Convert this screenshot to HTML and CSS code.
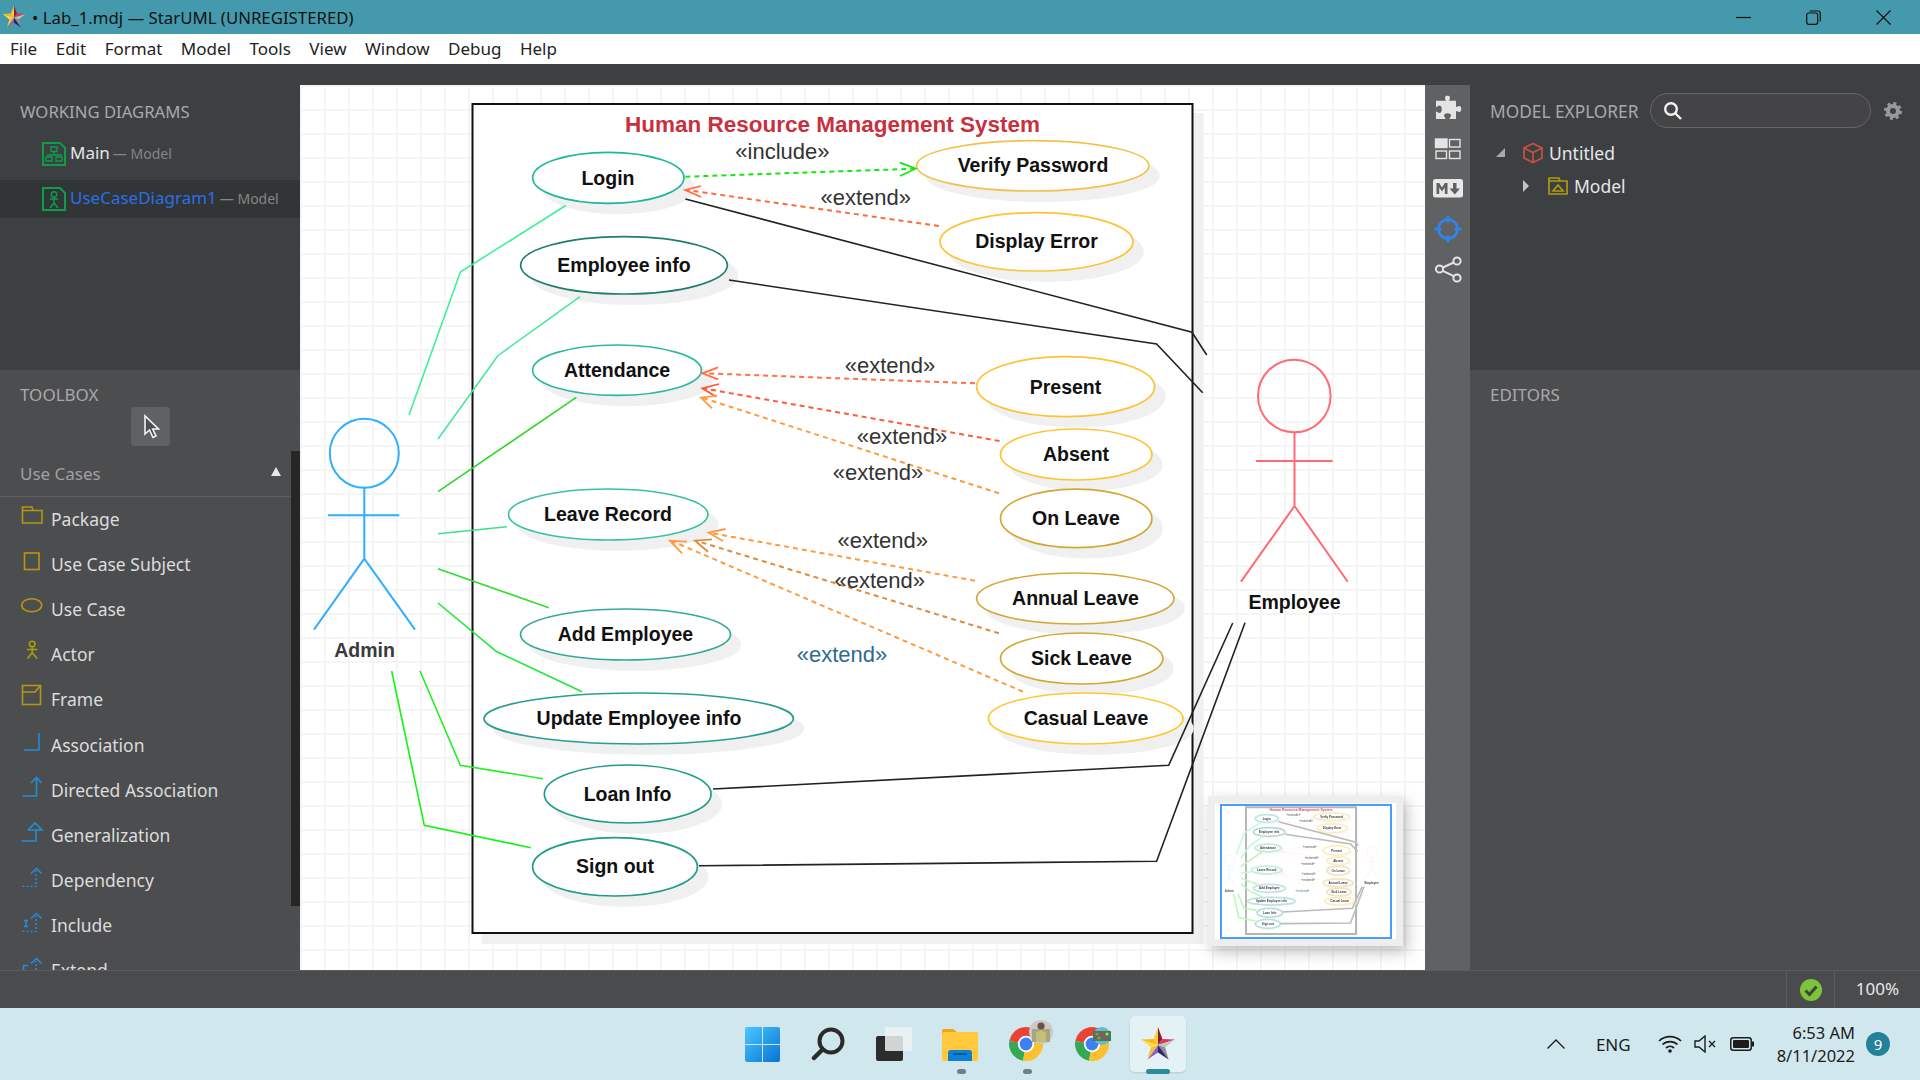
FILE: index.html
```html
<!DOCTYPE html>
<html lang="en">
<head>
    <meta charset="UTF-8">
    <meta name="viewport" content="width=device-width, initial-scale=1.0">
    <title>Lab_1.mdj — StarUML (UNREGISTERED)</title>
    <link rel="stylesheet" href="styles.css">
</head>
<body>
    <!-- shared star logo, used in the title bar and the taskbar -->
    <svg class="defs" width="0" height="0">
        <symbol id="star" viewBox="0 0 36 36">
            <polygon points="18,19 18,1 22.4,12.9" fill="#8c1a3c"/>
            <polygon points="18,19 22.4,12.9 35.1,13.4" fill="#d93a56"/>
            <polygon points="18,19 35.1,13.4 25.1,21.3" fill="#c4c4c4"/>
            <polygon points="18,19 25.1,21.3 28.6,33.6" fill="#8f8f8f"/>
            <polygon points="18,19 28.6,33.6 18,26.5" fill="#2d2366"/>
            <polygon points="18,19 18,26.5 7.4,33.6" fill="#8e5bd0"/>
            <polygon points="18,19 7.4,33.6 10.9,21.3" fill="#f2c230"/>
            <polygon points="18,19 10.9,21.3 0.9,13.4" fill="#ffdb4d"/>
            <polygon points="18,19 0.9,13.4 13.6,12.9" fill="#f7b918"/>
            <polygon points="18,19 13.6,12.9 18,1" fill="#fbcf2f"/>
        </symbol>
        <symbol id="chrome" viewBox="0 0 34 34">
            <path d="M17 17L31.7 8.5A17 17 0 0 0 .3 14Z" fill="#ea4335"/>
            <path d="M17 17L.3 14A17 17 0 0 0 14 33.7Z" fill="#34a853"/>
            <path d="M17 17L14 33.7A17 17 0 0 0 31.7 8.5Z" fill="#fbc02d"/>
            <circle cx="17" cy="17" r="8.2" fill="#fff"/>
            <circle cx="17" cy="17" r="6.4" fill="#3b82f0"/>
        </symbol>
        <linearGradient id="winblue" x1="0" y1="0" x2="1" y2="1">
            <stop offset="0" stop-color="#4cc6ff"/>
            <stop offset="1" stop-color="#0674d6"/>
        </linearGradient>
    </svg>

    <div class="titlebar">
        <div class="title-left">
            <svg class="logo" width="24" height="24"><use href="#star"/></svg>
            <span>• Lab_1.mdj — StarUML (UNREGISTERED)</span>
        </div>
        <div class="win-controls">
            <svg width="15" height="15" viewBox="0 0 15 15"><path d="M0 7.5H15"/></svg>
            <svg width="15" height="15" viewBox="0 0 15 15"><rect x="0.7" y="3" width="11" height="11.3" rx="2"/><path d="M3.5 1H12A2.5 2.5 0 0 1 14.3 3.5V11.5"/></svg>
            <svg width="15" height="15" viewBox="0 0 15 15"><path d="M0.5 0.5L14.5 14.5M14.5 0.5L0.5 14.5"/></svg>
        </div>
    </div>

    <div class="menubar">
        <span>File</span><span>Edit</span><span>Format</span><span>Model</span><span>Tools</span><span>View</span><span>Window</span><span>Debug</span><span>Help</span>
    </div>

    <div class="workspace">
        <div class="sidebar">
            <div class="working">
                <div class="panel-title">WORKING DIAGRAMS</div>
                <div class="diagram-row">
                    <svg class="doc-icon" viewBox="0 0 24 24" width="24" height="24">
                        <path d="M1 1H18L23 6V23H1Z"/>
                        <path class="thin" d="M9 5H15V9.5H9ZM12 9.5V13M5 13H19V14M4 15H10V19H4ZM14 15H20V19H14Z"/>
                    </svg>
                    <span class="row-name">Main</span><span class="row-sub">— Model</span>
                </div>
                <div class="diagram-row selected">
                    <svg class="doc-icon" viewBox="0 0 24 24" width="24" height="24">
                        <path d="M1 1H18L23 6V23H1Z"/>
                        <path class="thin" d="M12 10V16M8 12H16M12 16L8 21M12 16L16 21"/>
                        <circle class="thin" cx="12" cy="7.5" r="2.7"/>
                    </svg>
                    <span class="row-name">UseCaseDiagram1</span><span class="row-sub">— Model</span>
                </div>
            </div>

            <div class="toolbox">
                <div class="panel-title">TOOLBOX</div>
                <div class="tool-row">
                    <div class="pointer-btn">
                        <svg width="22" height="26" viewBox="0 0 22 26"><path d="M4 2V20L8.5 16L12 23.5L15 22L11.7 15H17.5Z"/></svg>
                    </div>
                </div>
                <div class="toolbox-body">
                    <div class="toolbox-main">
                        <div class="group-head"><span>Use Cases</span><i class="tri-up"></i></div>
                        <ul class="tool-list">
                            <li><svg class="gold" viewBox="0 0 24 24"><path d="M2.5 8.5H22V21H2.5ZM2.5 8.5V5H12L13 8.5"/></svg>Package</li>
                            <li><svg class="gold" viewBox="0 0 24 24"><rect x="4.5" y="6" width="14.5" height="16.5"/></svg>Use Case Subject</li>
                            <li><svg class="gold" viewBox="0 0 24 24"><ellipse cx="11.7" cy="13.3" rx="10" ry="6.5"/></svg>Use Case</li>
                            <li><svg class="gold" viewBox="0 0 24 24"><circle cx="12.2" cy="7" r="2.8"/><path d="M12.2 10V15.5M7 12.5H17.5M12.2 15.5L7.5 21.5M12.2 15.5L17 21.5"/></svg>Actor</li>
                            <li><svg class="gold" viewBox="0 0 24 24"><rect x="2.5" y="3.5" width="18" height="19"/><path d="M2.5 10H15L20 4"/></svg>Frame</li>
                            <li><svg class="blue" viewBox="0 0 24 24"><path d="M4 22H19V5"/></svg>Association</li>
                            <li><svg class="blue" viewBox="0 0 24 24"><path d="M2.5 23H16.5V5M11 10L16.5 4.5L21.5 10"/></svg>Directed Association</li>
                            <li><svg class="blue" viewBox="0 0 24 24"><path d="M1.5 23H16V12M8 12L15 5L22 12H8"/></svg>Generalization</li>
                            <li><svg class="blue" viewBox="0 0 24 24"><path class="dots" d="M2.5 23.5H16V8"/><path d="M11 10.5L16.5 5.5L21.5 10.5"/></svg>Dependency</li>
                            <li><svg class="blue" viewBox="0 0 24 24"><path class="dots" d="M2.5 23.5H16V8"/><path d="M11 10.5L16.5 5.5L21.5 10.5M4 12.5H8M6 12.5V18.5M4 18.5H8"/></svg>Include</li>
                            <li><svg class="blue" viewBox="0 0 24 24"><path class="dots" d="M2.5 23.5H16V8"/><path d="M11 10.5L16.5 5.5L21.5 10.5M8 12.5H3.5V18.5H8"/></svg>Extend</li>
                        </ul>
                    </div>
                    <div class="scroll-thumb"></div>
                </div>
            </div>
        </div>

        <div class="center">
            <div class="canvas">
                <svg class="diagram" viewBox="300 85 1125 885" width="1125" height="885">
                    <g id="umlShapes">
                        <rect class="frame" x="472.5" y="104" width="720" height="829"/>

                        <!-- use cases -->
                        <ellipse class="uc" stroke="#1fb5a0" cx="608.3" cy="177.8" rx="75.7" ry="25.5"/>
                        <ellipse class="uc" stroke="#f4c04a" cx="1032.8" cy="165.8" rx="116.2" ry="25.2"/>
                        <ellipse class="uc" stroke="#ffc233" cx="1036.5" cy="241.8" rx="96.5" ry="29.2"/>
                        <ellipse class="uc" stroke="#1f7f6e" cx="624" cy="265.3" rx="103.4" ry="28.7"/>
                        <ellipse class="uc" stroke="#2fb8a0" cx="617" cy="370.2" rx="84.4" ry="25.2"/>
                        <ellipse class="uc" stroke="#ffc233" cx="1065.6" cy="386.7" rx="89" ry="30"/>
                        <ellipse class="uc" stroke="#ffc233" cx="1076.2" cy="454.5" rx="75.7" ry="25.5"/>
                        <ellipse class="uc" stroke="#d4a733" cx="1076.2" cy="518.4" rx="75.7" ry="29.3"/>
                        <ellipse class="uc" stroke="#3cc0a5" cx="608.2" cy="514.5" rx="99.7" ry="25.5"/>
                        <ellipse class="uc" stroke="#d4a93a" cx="1075.3" cy="598.5" rx="98.7" ry="25.5"/>
                        <ellipse class="uc" stroke="#d4a733" cx="1081.7" cy="658.5" rx="81.2" ry="25.5"/>
                        <ellipse class="uc" stroke="#ffc72e" cx="1085.7" cy="718.5" rx="97.3" ry="25.5"/>
                        <ellipse class="uc" stroke="#35a898" cx="625.5" cy="634.5" rx="105" ry="25.5"/>
                        <ellipse class="uc" stroke="#2a9d8f" cx="638.7" cy="718.5" rx="154.7" ry="25.5"/>
                        <ellipse class="uc" stroke="#1f9c8a" cx="627.7" cy="794" rx="83.4" ry="29"/>
                        <ellipse class="uc" stroke="#1f9c8a" cx="615" cy="866.8" rx="82.4" ry="29.2"/>

                        <!-- admin associations -->
                        <polyline class="assoc" stroke="#3ff09a" points="409,415 460.4,272 565.7,205.5"/>
                        <polyline class="assoc" stroke="#45e89a" points="438,439 497.8,355.7 580,296.7"/>
                        <polyline class="assoc" stroke="#2ed62e" points="438,491.7 576.3,397.3"/>
                        <polyline class="assoc" stroke="#40e08a" points="438,533.7 507,526.7"/>
                        <polyline class="assoc" stroke="#2ee02e" points="438,568.7 548.7,607.7"/>
                        <polyline class="assoc" stroke="#1ee83c" points="438,603 496.5,651.5 582,691.7"/>
                        <polyline class="assoc" stroke="#22f022" points="420,671 460.3,765.3 543,778.7"/>
                        <polyline class="assoc" stroke="#11f511" points="391.7,671 424.3,825.3 530.8,847.7"/>

                        <!-- employee associations -->
                        <polyline class="assoc dark" points="685.4,199 1192,332.3 1206.7,355"/>
                        <polyline class="assoc dark" points="729,280 1156.6,344 1202.7,392.7"/>
                        <polyline class="assoc dark" points="713,789 1168.7,765.3 1232.7,623"/>
                        <polyline class="assoc dark" points="699,865.7 1156.6,861.3 1245,622.7"/>

                        <!-- include / extend dependencies -->
                        <g stroke="#12e812">
                            <line class="dash" x1="685.4" y1="176.7" x2="915" y2="168.7"/>
                            <polyline class="head" points="900,162.7 915.6,168.7 900,176"/>
                        </g>
                        <g stroke="#ff6b3d">
                            <line class="dash" x1="939" y1="226" x2="686" y2="190"/>
                            <polyline class="head" points="701,186 685.4,190 701,197"/>
                        </g>
                        <g stroke="#ff7043">
                            <line class="dash" x1="975" y1="383.3" x2="703" y2="373.3"/>
                            <polyline class="head" points="718,367.3 702.4,373.3 718,379.3"/>
                        </g>
                        <g stroke="#ff5a3a">
                            <line class="dash" x1="999.5" y1="441" x2="703" y2="388.3"/>
                            <polyline class="head" points="719,384 702.4,388.3 716,396.7"/>
                        </g>
                        <g stroke="#ff9a3d">
                            <line class="dash" x1="999" y1="493.3" x2="702" y2="397.7"/>
                            <polyline class="head" points="717,395.7 701,397.7 712,408.3"/>
                        </g>
                        <g stroke="#ff9a3d">
                            <line class="dash" x1="975" y1="580.7" x2="709" y2="532.7"/>
                            <polyline class="head" points="725.6,529 708.7,532.7 723,541"/>
                        </g>
                        <g stroke="#e08a3c">
                            <line class="dash" x1="999" y1="633.3" x2="696" y2="540.7"/>
                            <polyline class="head" points="712,539.3 695,540.7 708,551.7"/>
                        </g>
                        <g stroke="#ff9a3d">
                            <line class="dash" x1="1023" y1="691.7" x2="671" y2="540.7"/>
                            <polyline class="head" points="687,541.7 670,540.7 682,553.3"/>
                        </g>

                        <!-- actors -->
                        <g class="actor" stroke="#2fb0ff">
                            <circle cx="364.3" cy="453.3" r="34.5"/>
                            <path d="M364.3 488V558.7M328 515.3H399.3M364.3 558.7L314 629.7M364.3 558.7L415 629.7"/>
                        </g>
                        <g class="actor" stroke="#ff6b72">
                            <circle cx="1294.3" cy="396" r="36.3"/>
                            <path d="M1294.5 432V506M1256 461H1332.7M1294.5 506L1241 581.7M1294.5 506L1347.7 581.7"/>
                        </g>
                    </g>

                    <g id="umlLabels">
                        <text class="frame-title" x="832.5" y="124">Human Resource Management System</text>

                        <text class="uc-label" x="608" y="178">Login</text>
                        <text class="uc-label" x="1033" y="165">Verify Password</text>
                        <text class="uc-label" x="1036.5" y="241">Display Error</text>
                        <text class="uc-label" x="624" y="265">Employee info</text>
                        <text class="uc-label" x="617" y="370">Attendance</text>
                        <text class="uc-label" x="1065.5" y="387">Present</text>
                        <text class="uc-label" x="1076" y="453.5">Absent</text>
                        <text class="uc-label" x="1076" y="518">On Leave</text>
                        <text class="uc-label" x="608" y="514">Leave Record</text>
                        <text class="uc-label" x="1075.5" y="597.5">Annual Leave</text>
                        <text class="uc-label" x="1081.5" y="657.5">Sick Leave</text>
                        <text class="uc-label" x="1086" y="717.5">Casual Leave</text>
                        <text class="uc-label" x="625.5" y="633.5">Add Employee</text>
                        <text class="uc-label" x="639" y="717.5">Update Employee info</text>
                        <text class="uc-label" x="627.5" y="793.5">Loan Info</text>
                        <text class="uc-label" x="615" y="866">Sign out</text>

                        <!-- stereotype labels -->
                        <text class="stereo" x="782.4" y="151.6">«include»</text>
                        <text class="stereo" x="865.7" y="197">«extend»</text>
                        <text class="stereo" x="890" y="365.7">«extend»</text>
                        <text class="stereo" x="902" y="436.7">«extend»</text>
                        <text class="stereo" x="878" y="472">«extend»</text>
                        <text class="stereo" x="882.7" y="540">«extend»</text>
                        <text class="stereo" x="879.8" y="580.7">«extend»</text>
                        <text class="stereo blue-label" x="842" y="654">«extend»</text>

                        <text class="actor-name admin" x="364.5" y="650">Admin</text>
                        <text class="actor-name" x="1294.5" y="602">Employee</text>
                    </g>
                </svg>

                <div class="minimap">
                    <svg viewBox="269.6 76 1184.6 890" width="181" height="136">
                        <g opacity="0.3"><use href="#umlShapes"/></g>
                        <g opacity="0.85"><use href="#umlLabels"/></g>
                        <rect class="mini-view" x="308.9" y="89" width="1112.6" height="870"/>
                    </svg>
                </div>
            </div>

            <div class="side-strip">
                <svg width="28" height="28" viewBox="0 0 28 28" class="strip-fill"><path d="M11 3.5C11 1 16 1 16 3.5C16 5 15.2 5.5 15.2 6.8H22V13C23.5 13 24 12 25.3 12C28 12 28 18 25.3 18C24 18 23.5 17 22 17V25H15.5C15.5 23.5 17 23 17 21.3C17 18.5 10 18.5 10 21.3C10 23 11.5 23.5 11.5 25H2V17.5C3.5 17.5 4 19 5.5 19C8.5 19 8.5 11.5 5.5 11.5C4 11.5 3.5 13 2 13V6.8H11.8C11.8 5.5 11 5 11 3.5Z"/></svg>
                <svg width="28" height="22" viewBox="0 0 28 22" class="strip-grid"><rect class="solid" x="1.5" y="1" width="11.5" height="8.5"/><rect x="15.5" y="1.5" width="10.5" height="7.5"/><rect x="2" y="13" width="10.5" height="7.5"/><rect x="15.5" y="13" width="10.5" height="7.5"/></svg>
                <svg width="30" height="19" viewBox="0 0 30 19" class="strip-md"><rect width="30" height="18.5" rx="2.5"/><path d="M3.5 15V4H6.2L9 8.5L11.8 4H14.5V15H11.8V8.5L9 12.5L6.2 8.5V15ZM20 4H23.5V9.5H27L21.8 15.5L16.5 9.5H20Z"/></svg>
                <svg width="28" height="28" viewBox="0 0 28 28" class="strip-target"><circle cx="14" cy="14" r="9.5"/><path d="M14 .5V7.5M14 20.5V27.5M.5 14H7.5M20.5 14H27.5"/></svg>
                <svg width="28" height="28" viewBox="0 0 28 28" class="strip-share"><circle cx="23" cy="6" r="3.6"/><circle cx="5.5" cy="14" r="3.6"/><circle cx="23" cy="23" r="3.6"/><path d="M8.8 12.5L19.8 7.5M8.8 15.8L19.8 21.2"/></svg>
            </div>
        </div>

        <div class="rightpanel">
            <div class="explorer">
                <div class="explorer-head">
                    <span class="panel-title">MODEL EXPLORER</span>
                    <div class="search-box">
                        <svg width="20" height="20" viewBox="0 0 20 20"><circle cx="8" cy="8" r="5.8"/><path d="M12.5 12.5L18 18"/></svg>
                    </div>
                    <svg class="gear" width="18" height="18" viewBox="0 0 18 18"><circle cx="9" cy="9" r="5" stroke-width="4"/><circle class="teeth" cx="9" cy="9" r="7.5" stroke-width="3"/></svg>
                </div>
                <div class="tree-row">
                    <i class="tri-open"></i>
                    <svg class="cube" width="22" height="22" viewBox="0 0 22 22"><path d="M11 1.5L20 6V16L11 20.5L2 16V6ZM2 6L11 10.5L20 6M11 10.5V20.5"/></svg>
                    <span>Untitled</span>
                </div>
                <div class="tree-row child">
                    <i class="tri-closed"></i>
                    <svg class="pkg" width="20" height="18" viewBox="0 0 20 18"><path d="M1 1H11L12 4H19V17H1ZM1 4H12"/><path d="M5 14L10 8L15 14Z"/></svg>
                    <span>Model</span>
                </div>
            </div>
            <div class="editors">
                <div class="panel-title">EDITORS</div>
            </div>
        </div>
    </div>

    <div class="statusbar">
        <div class="status-cell check-cell">
            <svg width="22" height="22" viewBox="0 0 22 22"><circle cx="11" cy="11" r="11" fill="#7cc53a"/><path d="M5.5 11.5L9.5 15.5L16.5 7.5" fill="none" stroke="#3f4442" stroke-width="3"/></svg>
        </div>
        <div class="status-cell zoom-cell">100%</div>
    </div>

    <div class="taskbar">
        <div></div>
        <div class="task-icons">
            <div class="slot">
                <svg width="35" height="35" viewBox="0 0 35 35" fill="url(#winblue)"><path d="M0 2A2 2 0 0 1 2 0H17V17H0ZM18 0H33A2 2 0 0 1 35 2V17H18ZM0 18H17V35H2A2 2 0 0 1 0 33ZM18 18H35V33A2 2 0 0 1 33 35H18Z"/></svg>
            </div>
            <div class="slot">
                <svg width="34" height="34" viewBox="0 0 34 34" fill="none" stroke="#2b2b2b" stroke-linecap="round"><circle cx="20" cy="14" r="11.5" stroke-width="4"/><path d="M11.5 22.5L3 31" stroke-width="4.5"/></svg>
            </div>
            <div class="slot">
                <svg width="36" height="34" viewBox="0 0 36 34"><rect y="9" width="27" height="25" rx="2" fill="#2c2c2c"/><rect x="9" width="27" height="24" rx="1.5" fill="#eef2f3" fill-opacity="0.85"/></svg>
            </div>
            <div class="slot running">
                <svg width="36" height="33" viewBox="0 0 36 33"><path d="M0 3A2 2 0 0 1 2 1H11L15 4H34A2 2 0 0 1 36 6V12H0Z" fill="#e6a817"/><rect y="4" width="36" height="29" rx="2" fill="#ffc83d"/><path d="M6 33V25A3 3 0 0 1 9 22H27A3 3 0 0 1 30 25V33Z" fill="#0f7fd4"/><rect x="11" y="25" width="14" height="2" fill="#0a5ea3"/></svg>
            </div>
            <div class="slot running">
                <svg width="34" height="34"><use href="#chrome"/></svg>
                <svg class="avatar" width="24" height="24" viewBox="0 0 24 24"><circle cx="12" cy="12" r="12" fill="#c9c9c9"/><rect x="3" y="9" width="18" height="13" fill="#a9a57d"/><path d="M7 22V13L12 10L17 13V22Z" fill="#c5bf78"/><circle cx="12" cy="6" r="3.6" fill="#6c5148"/></svg>
            </div>
            <div class="slot">
                <svg width="34" height="34"><use href="#chrome"/></svg>
                <svg class="avatar small" width="18" height="18" viewBox="0 0 18 18"><circle cx="9" cy="9" r="9" fill="#68b9c9"/><rect y="4" width="18" height="10" fill="#3f7f5c"/><circle cx="4" cy="7" r="1.6" fill="#e05a8c"/><circle cx="9" cy="7" r="1.6" fill="#e8324a"/><circle cx="14" cy="7" r="1.6" fill="#f0c040"/><circle cx="6" cy="11" r="1.6" fill="#f07030"/><circle cx="12" cy="11" r="1.6" fill="#d8304f"/></svg>
            </div>
            <div class="slot active">
                <div class="tile"><svg width="36" height="36"><use href="#star"/></svg></div>
            </div>
        </div>
        <div class="tray">
            <svg class="chevron" width="18" height="10" viewBox="0 0 18 10"><path d="M0.5 9.5L9 1L17.5 9.5"/></svg>
            <span class="lang">ENG</span>
            <svg class="wifi" width="24" height="18" viewBox="0 0 24 18"><path d="M1 6A16 16 0 0 1 23 6M4.5 9.5A11 11 0 0 1 19.5 9.5M8 13A6 6 0 0 1 16 13"/><circle cx="12" cy="16" r="1.8"/></svg>
            <svg class="mute" width="22" height="18" viewBox="0 0 22 18"><path d="M1 6V12H5L11 17V1L5 6ZM15 6L21 12M21 6L15 12"/></svg>
            <svg class="battery" width="24" height="14" viewBox="0 0 24 14"><rect x="0.8" y="0.8" width="20.4" height="12.4" rx="2.5" class="batt-case"/><rect x="3" y="3" width="16" height="8" rx="1"/><rect x="22" y="4.5" width="2" height="5"/></svg>
            <div class="clock"><span>6:53 AM</span><span>8/11/2022</span></div>
            <div class="badge">9</div>
        </div>
    </div>
</body>
</html>
```
FILE: styles.css
```css
* {
    box-sizing: border-box;
}

html, body {
    margin: 0;
    padding: 0;
    width: 1920px;
    height: 1080px;
    overflow: hidden;
    font-family: "Noto Sans", sans-serif;
    background-color: #3c4043;
}

body {
    display: flex;
    flex-direction: column;
}

.defs {
    position: absolute;
}

/* title bar + menu */
.titlebar {
    height: 34px;
    background-color: #4599ad;
    display: flex;
    justify-content: space-between;
    align-items: center;
    color: #111;
    font-size: 16.8px;
}

.title-left {
    display: flex;
    align-items: center;
    gap: 6px;
    padding-left: 2px;
}

.win-controls {
    display: flex;
    gap: 55px;
    padding-right: 29px;
}

.win-controls svg {
    fill: none;
    stroke: #111;
    stroke-width: 1.2;
}

.menubar {
    height: 30px;
    background-color: #fff;
    display: flex;
    align-items: center;
    gap: 18.5px;
    padding: 0 0 2px 10px;
    font-size: 17px;
    color: #222;
}

/* main area */
.workspace {
    height: 906px;
    display: flex;
}

.sidebar {
    width: 300px;
    display: flex;
    flex-direction: column;
    overflow: hidden;
}

.panel-title {
    font-size: 17px;
    line-height: 24px;
    color: #a9a9a9;
    padding-left: 20px;
    padding-top: 1px;
}

.working {
    height: 306px;
    padding-top: 35px;
    background-color: #3c4043;
}

.working .panel-title {
    font-size: 16.7px;
}

.diagram-row {
    height: 38px;
    margin-top: 7px;
    padding: 0 0 0 42px;
    display: flex;
    align-items: center;
}

.working .panel-title + .diagram-row {
    margin-top: 11px;
}

.diagram-row.selected {
    background-color: #323536;
}

.doc-icon {
    fill: none;
    stroke: #0f9d4a;
    stroke-width: 2;
    margin-right: 4px;
}

.doc-icon .thin {
    stroke-width: 1.4;
}

.row-name {
    font-size: 17px;
    color: #e6e6e6;
    margin-bottom: 3px;
}

.selected .row-name {
    color: #2a6fe8;
}

.row-sub {
    font-size: 14px;
    color: #858585;
    margin-left: 3px;
    margin-bottom: 2px;
}

.toolbox {
    flex: 1;
    padding-top: 12px;
    background-color: #4c4d4f;
    overflow: hidden;
}

.tool-row {
    height: 44px;
    padding-left: 131px;
}

.pointer-btn {
    width: 39px;
    height: 39px;
    border-radius: 4px;
    background-color: #5f6265;
    display: flex;
    align-items: center;
    justify-content: center;
}

.pointer-btn svg {
    margin-left: 2px;
}

.pointer-btn path {
    fill: #4c5054;
    stroke: #f2f2f2;
    stroke-width: 1.6;
}

.toolbox-body {
    display: flex;
}

.toolbox-main {
    width: 291px;
}

.scroll-thumb {
    width: 9px;
    height: 455px;
    background-color: #262626;
}

.group-head {
    height: 46px;
    padding: 0 10px 0 20px;
    display: flex;
    align-items: center;
    justify-content: space-between;
    border-bottom: 1px solid #5e5e5e;
    font-size: 17px;
    color: #a0a0a0;
}

.tri-up {
    width: 0;
    height: 0;
    border-left: 5px solid transparent;
    border-right: 5px solid transparent;
    border-bottom: 9px solid #e6e6e6;
    margin-bottom: 4px;
}

.tool-list {
    list-style: none;
    margin: 0;
    padding: 0;
}

.tool-list li {
    height: 45.1px;
    padding: 0 0 1px 20px;
    display: flex;
    align-items: center;
    gap: 7px;
    font-size: 17.5px;
    color: #dcdcdc;
}

.tool-list svg {
    width: 24px;
    height: 24px;
    flex: none;
    fill: none;
    stroke-width: 1.6;
    margin-bottom: 10px;
}

.tool-list .gold {
    stroke: #b09a10;
}

.tool-list .blue {
    stroke: #1f8fd8;
}

.tool-list .dots {
    stroke-dasharray: 2 2;
}

/* canvas */
.center {
    width: 1170px;
    padding-top: 21px;
    display: flex;
    background-color: #3c4043;
}

.canvas {
    position: relative;
    width: 1125px;
    height: 885px;
    overflow: hidden;
    background-color: #fff;
    background-image:
        linear-gradient(to right, #f5f5f5 2px, transparent 2px),
        linear-gradient(to bottom, #f5f5f5 2px, transparent 2px);
    background-size: 24px 24px;
}

.diagram {
    display: block;
}

.frame {
    fill: #fff;
    stroke: #111;
    stroke-width: 2;
    vector-effect: non-scaling-stroke;
    filter: drop-shadow(10px 10px 0 #f0f0f0);
}

.frame-title {
    font-family: "Liberation Sans", Arial, sans-serif;
    font-weight: bold;
    font-size: 22.5px;
    fill: #c9303e;
    text-anchor: middle;
    dominant-baseline: central;
}

.assoc {
    fill: none;
    stroke-width: 1.6;
    vector-effect: non-scaling-stroke;
}

.assoc.dark {
    stroke: #222;
}

.dash {
    stroke-width: 2;
    stroke-dasharray: 5 4;
}

.head {
    fill: none;
    stroke-width: 1.8;
}

.uc {
    fill: #fff;
    stroke-width: 1.7;
    vector-effect: non-scaling-stroke;
    filter: drop-shadow(10px 10px 0 #f0f0f0);
}

.uc-label {
    font-family: "Liberation Sans", Arial, sans-serif;
    font-weight: bold;
    font-size: 19.5px;
    fill: #111;
    text-anchor: middle;
    dominant-baseline: central;
}

.stereo {
    font-family: "Liberation Sans", Arial, sans-serif;
    font-size: 22px;
    fill: #333;
    text-anchor: middle;
    dominant-baseline: central;
}

.blue-label {
    fill: #2d6a8f;
}

.actor {
    fill: none;
    stroke-width: 2;
}

.actor-name {
    font-family: "Liberation Sans", Arial, sans-serif;
    font-weight: bold;
    font-size: 19.5px;
    fill: #111;
    text-anchor: middle;
    dominant-baseline: central;
    transform: translateY(-0.5px);
}

.actor-name.admin {
    fill: #3a3a3a;
}

.minimap {
    position: absolute;
    left: 908px;
    top: 711px;
    width: 195px;
    height: 150px;
    padding: 7px;
    background-color: #eee;
    box-shadow: 4px 6px 14px rgba(0, 0, 0, 0.25);
}

.minimap svg {
    display: block;
    background-color: #fff;
}

.mini-view {
    fill: none;
    stroke: #4a9cff;
    stroke-width: 2;
    vector-effect: non-scaling-stroke;
}

.side-strip {
    width: 45px;
    height: 885px;
    background-color: #606163;
    display: flex;
    flex-direction: column;
    align-items: center;
    padding-top: 9px;
}

.side-strip svg {
    flex: none;
}

.strip-fill {
    fill: #e4e4e4;
    margin-bottom: 16px;
}

.strip-grid {
    fill: none;
    stroke: #e4e4e4;
    stroke-width: 1.4;
    margin-bottom: 19px;
}

.strip-grid .solid {
    fill: #e4e4e4;
}

.strip-md {
    margin-bottom: 17px;
}

.strip-md rect {
    fill: #e8e8e8;
}

.strip-md path {
    fill: #606163;
}

.strip-target {
    fill: none;
    stroke: #2b86f0;
    stroke-width: 2.6;
    margin-bottom: 12px;
}

.strip-share {
    fill: none;
    stroke: #e4e4e4;
    stroke-width: 2;
}

/* right panel */
.rightpanel {
    width: 450px;
    display: flex;
    flex-direction: column;
}

.explorer {
    height: 306px;
    padding-top: 29px;
    background-color: #3c4043;
}

.explorer-head {
    display: flex;
    align-items: center;
    height: 35px;
}

.explorer-head .panel-title {
    font-size: 17.3px;
    padding-top: 2px;
}

.search-box {
    width: 221px;
    height: 35px;
    margin-left: 12px;
    padding-left: 12px;
    border: 1.5px solid #666;
    border-radius: 18px;
    background-color: #444446;
    display: flex;
    align-items: center;
}

.search-box svg {
    fill: none;
    stroke: #f2f2f2;
    stroke-width: 2.4;
}

.gear {
    margin-left: 13px;
    fill: none;
    stroke: #999;
}

.gear .teeth {
    stroke-dasharray: 2.95 2.95;
}

.tree-row {
    height: 33px;
    display: flex;
    align-items: center;
    padding-left: 26px;
    font-size: 17.5px;
    color: #e6e6e6;
}

.explorer-head + .tree-row {
    margin-top: 8px;
}

.tree-row.child {
    padding-left: 53px;
}

.tri-open {
    width: 0;
    height: 0;
    border-left: 9px solid transparent;
    border-bottom: 9px solid #a8a8a8;
    margin-right: 17px;
}

.tri-closed {
    width: 0;
    height: 0;
    border-top: 6px solid transparent;
    border-bottom: 6px solid transparent;
    border-left: 6px solid #c4c4c4;
    margin-right: 19px;
}

.cube {
    fill: none;
    stroke: #c8503c;
    stroke-width: 1.7;
    margin-right: 5px;
}

.pkg {
    fill: none;
    stroke: #b09a10;
    stroke-width: 1.7;
    margin-right: 6px;
}

.editors {
    flex: 1;
    padding-top: 12px;
    background-color: #4c4d4f;
}

/* status bar */
.statusbar {
    height: 38px;
    background-color: #4a4b4d;
    border-top: 1px solid #5c5c5c;
    display: flex;
    justify-content: flex-end;
}

.status-cell {
    border-left: 1px solid #5c5c5c;
    display: flex;
    align-items: center;
    justify-content: center;
}

.check-cell {
    width: 48px;
}

.zoom-cell {
    width: 86px;
    padding-bottom: 2px;
    font-size: 17px;
    color: #e8e8e8;
}

/* windows taskbar */
.taskbar {
    height: 72px;
    background-color: #cfe7ed;
    display: grid;
    grid-template-columns: 1fr auto 1fr;
}

.task-icons {
    display: flex;
}

.slot {
    position: relative;
    width: 66px;
    height: 72px;
    display: flex;
    align-items: center;
    justify-content: center;
}

.slot.running::after {
    content: "";
    position: absolute;
    left: 30px;
    bottom: 6px;
    width: 9px;
    height: 5px;
    border-radius: 3px;
    background-color: #708088;
}

.slot.active::after {
    content: "";
    position: absolute;
    left: 21px;
    bottom: 6px;
    width: 24px;
    height: 5px;
    border-radius: 3px;
    background-color: #2a8a9a;
}

.tile {
    width: 56px;
    height: 56px;
    border-radius: 5px;
    background-color: #e4f2f6;
    box-shadow: 0 1px 2px rgba(0, 0, 0, 0.12);
    display: flex;
    align-items: center;
    justify-content: center;
}

.avatar {
    position: absolute;
    left: 36px;
    top: 12px;
}

.avatar.small {
    left: 34px;
    top: 19px;
}

.tray {
    justify-self: end;
    display: flex;
    align-items: center;
    padding-right: 30px;
    color: #1c1c1c;
}

.chevron {
    fill: none;
    stroke: #1c1c1c;
    stroke-width: 1.3;
    margin-right: 31px;
}

.lang {
    font-size: 17px;
    margin-right: 27px;
}

.wifi {
    fill: none;
    stroke: #1c1c1c;
    stroke-width: 1.7;
    margin-right: 12px;
}

.wifi circle {
    fill: #1c1c1c;
    stroke: none;
}

.mute {
    fill: none;
    stroke: #1c1c1c;
    stroke-width: 1.4;
    margin-right: 14px;
}

.battery {
    fill: #1c1c1c;
    margin-right: 23px;
}

.batt-case {
    fill: none;
    stroke: #1c1c1c;
    stroke-width: 1.5;
}

.clock {
    display: flex;
    flex-direction: column;
    align-items: flex-end;
    font-size: 16.5px;
    line-height: 23px;
    margin-right: 11px;
}

.badge {
    width: 24px;
    height: 24px;
    border-radius: 50%;
    background-color: #23819a;
    color: #fff;
    font-size: 15px;
    display: flex;
    align-items: center;
    justify-content: center;
}
```
